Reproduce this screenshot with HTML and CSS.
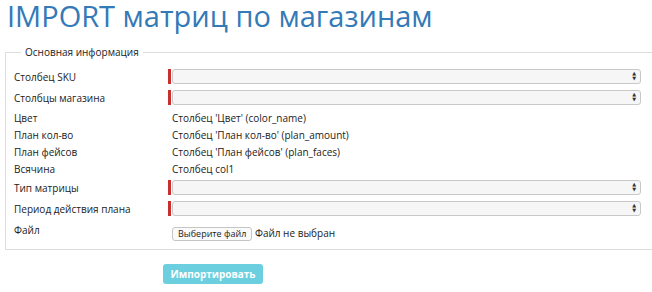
FILE: index.html
```html
<!DOCTYPE html>
<html>
<head>
<meta charset="utf-8"/>
<title>IMPORT матриц по магазинам</title>
<link rel="stylesheet" href="styles.css">
</head>
<body>
<h1 class="title">IMPORT матриц по магазинам</h1>

<fieldset class="box">
  <legend class="box-legend">Основная информация</legend>

  <div class="row row-select">
    <div class="label">Столбец SKU</div>
    <div class="field"><span class="req"></span><span class="select"><span class="arrows">&#9650;<br>&#9660;</span></span></div>
  </div>
  <div class="row row-select">
    <div class="label">Столбцы магазина</div>
    <div class="field"><span class="req"></span><span class="select"><span class="arrows">&#9650;<br>&#9660;</span></span></div>
  </div>
  <div class="row row-text first-text">
    <div class="label">Цвет</div>
    <div class="value">Столбец 'Цвет' (color_name)</div>
  </div>
  <div class="row row-text">
    <div class="label">План кол-во</div>
    <div class="value">Столбец 'План кол-во' (plan_amount)</div>
  </div>
  <div class="row row-text">
    <div class="label">План фейсов</div>
    <div class="value">Столбец 'План фейсов' (plan_faces)</div>
  </div>
  <div class="row row-text">
    <div class="label">Всячина</div>
    <div class="value">Столбец col1</div>
  </div>
  <div class="row row-select">
    <div class="label">Тип матрицы</div>
    <div class="field"><span class="req"></span><span class="select"><span class="arrows">&#9650;<br>&#9660;</span></span></div>
  </div>
  <div class="row row-select">
    <div class="label">Период действия плана</div>
    <div class="field"><span class="req"></span><span class="select"><span class="arrows">&#9650;<br>&#9660;</span></span></div>
  </div>
  <div class="row row-file">
    <div class="label label-file">Файл</div>
    <div class="value"><span class="file-btn">Выберите файл</span> Файл не выбран</div>
  </div>
</fieldset>

<div class="actions">
  <span class="btn-import">Импортировать</span>
</div>
</body>
</html>
```

FILE: styles.css
```css
html, body {
   margin: 0;
   padding: 0;
   background-color: white;
   overflow: hidden;
}

body {
   font-family: "Open Sans", "DejaVu Sans", sans-serif;
   font-size: 10px;
   color: #222;
}

.title {
   margin: 0;
   padding: 0 0 14px 7px;
   line-height: 31px;
   font-size: 29px;
   font-weight: normal;
   color: #337ab7;
}

.box {
   margin: 0 0 0 5px;
   width: 647px;
   padding: 7px 0 0 0;
   border: 1px solid #ddd;
   border-right: none;
   box-sizing: border-box;
   height: 205px;
}

.box-legend {
   margin-left: 15px;
   padding: 0 4px;
   font-size: 10px;
   color: #222;
}

.row {
   display: flex;
   align-items: center;
   padding-left: 8px;
}

.row-select {
   height: 21px;
}

.row-text {
   height: 17px;
}

.first-text {
   margin-top: 1px;
}

.row-file {
   height: 22px;
   align-items: flex-end;
}

.label {
   width: 154px;
   flex: none;
}

.label-file {
   padding-bottom: 4px;
}

.field {
   display: flex;
   align-items: center;
   width: 473px;
}

.req {
   width: 3px;
   height: 15px;
   background-color: #c9302c;
   margin-right: 1px;
}

.select {
   position: relative;
   flex: 1;
   height: 13px;
   border: 1px solid #c8c8c8;
   border-radius: 3px;
   background-color: #f6f6f6;
}

.arrows {
   position: absolute;
   right: 4px;
   top: 1px;
   font-size: 5px;
   line-height: 5px;
   color: #333;
}

.value {
   padding-left: 4px;
}

.file-btn {
   display: inline-block;
   height: 12px;
   line-height: 12px;
   padding: 0 5px;
   border: 1px solid #c5c5c5;
   border-radius: 3px;
   background-color: #fafafa;
   font-size: 9px;
}

.actions {
   padding: 14px 0 0 163px;
}

.btn-import {
   display: inline-block;
   width: 100px;
   height: 20px;
   line-height: 20px;
   text-align: center;
   border-radius: 3px;
   background-color: #6bcfe0;
   color: white;
   font-weight: bold;
   font-size: 10px;
}
```
